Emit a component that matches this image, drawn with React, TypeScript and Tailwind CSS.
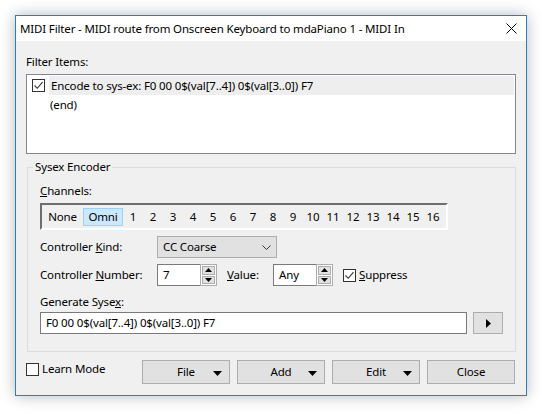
import React from 'react';

const font = "font-['Segoe_UI','Noto_Sans',sans-serif]";

function CheckBox({ checked }: { checked: boolean }) {
  return (
    <span className="w-[13px] h-[13px] border border-[#333333] bg-white flex items-center justify-center shrink-0">
      {checked && (
        <svg width="11" height="11" viewBox="0 0 11 11">
          <path d="M1.5 5.5 L4.3 8.3 L9.5 2.2" fill="none" stroke="#333333" strokeWidth="1.1" />
        </svg>
      )}
    </span>
  );
}

function Spin({ value, width }: { value: string; width: string }) {
  return (
    <div className={`flex h-[22px] ${width}`}>
      <div className="flex-1 bg-white border border-[#7a7a7a] border-r-0 pl-[5px] flex items-center">{value}</div>
      <div className="w-[17px] flex flex-col border border-[#adadad] bg-white p-px gap-px">
        <div className="flex-1 bg-[#e1e1e1] border border-[#adadad] flex items-center justify-center">
          <svg width="7" height="4" viewBox="0 0 7 4"><path d="M0 4 L3.5 0 L7 4 Z" fill="#000" /></svg>
        </div>
        <div className="flex-1 bg-[#e1e1e1] border border-[#adadad] flex items-center justify-center">
          <svg width="7" height="4" viewBox="0 0 7 4"><path d="M0 0 L7 0 L3.5 4 Z" fill="#000" /></svg>
        </div>
      </div>
    </div>
  );
}

function Button({ label, menu }: { label: string; menu?: boolean }) {
  return (
    <button className="relative w-[88px] h-[24px] bg-[#e1e1e1] border border-[#adadad] flex items-center justify-center">
      <span>{label}</span>
      {menu && (
        <svg className="absolute right-[7px] top-[10px]" width="9" height="5" viewBox="0 0 9 5">
          <path d="M0 0 L9 0 L4.5 5 Z" fill="#000" />
        </svg>
      )}
    </button>
  );
}

export default function App() {
  const channels = Array.from({ length: 16 }, (_, i) => String(i + 1));

  return (
    <div className={`w-[542px] h-[414px] bg-white pt-[15px] pl-[15px] text-[11.5px] leading-[16px] tracking-[-0.15px] text-black ${font}`}>
      <div className="w-[512px] h-[381px] border border-[#1883d7] bg-[#f0f0f0] flex flex-col shadow-[0_0_14px_rgba(0,0,0,0.28)]">
        {/* Title bar */}
        <div className="h-[25px] bg-white flex items-center pl-[4px] pr-[9px] shrink-0">
          <span className="flex-1">MIDI Filter - MIDI route from Onscreen Keyboard to mdaPiano 1 - MIDI In</span>
          <svg width="11" height="11" viewBox="0 0 11 11">
            <path d="M0.5 0.5 L10.5 10.5 M10.5 0.5 L0.5 10.5" stroke="#000" strokeWidth="1" />
          </svg>
        </div>

        {/* Body */}
        <div className="flex-1 flex flex-col px-[10px] pt-[13px]">
          <div>Filter Items:</div>
          <div className="mt-[4px] h-[80px] bg-white border border-[#828790] pt-[1px] pr-[1px]">
            <div className="flex items-center h-[19px]">
              <span className="w-[5px]" />
              <CheckBox checked />
              <span className="ml-[4px] flex-1 h-full bg-[#eeeeee] flex items-center pl-[2px]">
                Encode to sys-ex: F0 00 0$(val[7..4]) 0$(val[3..0]) F7
              </span>
            </div>
            <div className="h-[19px] flex items-center pl-[23px]">(end)</div>
          </div>

          {/* Sysex Encoder group */}
          <fieldset className="mt-[5px] ml-px mr-px border border-[#dcdcdc] px-[12px] pb-[17px]">
            <legend className="ml-[-7px] px-[2px]">Sysex Encoder</legend>
            <div className="mt-[8px]"><u>C</u>hannels:</div>
            <div className="mt-[4px] w-[408px] h-[27px] border-2 border-t-[#6e6e6e] border-l-[#6e6e6e] border-b-white border-r-white flex items-center">
              <span className="w-[41px] text-center">None</span>
              <span className="w-[40px] h-[18px] bg-[#cce8ff] border border-[#99d1ff] flex items-center justify-center">Omni</span>
              {channels.map((c) => (
                <span key={c} className="w-[20px] text-center">{c}</span>
              ))}
            </div>

            <div className="mt-[6px] flex items-center">
              <span className="w-[117px]">Controller <u>K</u>ind:</span>
              <div className="w-[120px] h-[22px] bg-[#e1e1e1] border border-[#adadad] flex items-center pl-[5px] pr-[5px]">
                <span className="flex-1">CC Coarse</span>
                <svg width="9" height="5" viewBox="0 0 9 5">
                  <path d="M0.5 0.5 L4.5 4.5 L8.5 0.5" fill="none" stroke="#333" strokeWidth="1" />
                </svg>
              </div>
            </div>

            <div className="mt-[6px] flex items-center">
              <span className="w-[117px]">Controller <u>N</u>umber:</span>
              <Spin value="7" width="w-[60px]" />
              <span className="ml-[10px] w-[46px]"><u>V</u>alue:</span>
              <Spin value="Any" width="w-[60px]" />
              <span className="ml-[10px] flex items-center gap-[3px]">
                <CheckBox checked />
                <span><u>S</u>uppress</span>
              </span>
            </div>

            <div className="mt-[8px]">Generate Syse<u>x</u>:</div>
            <div className="mt-[2px] flex items-center">
              <div className="w-[427px] h-[22px] bg-white border border-[#7a7a7a] pl-[5px] flex items-center">
                F0 00 0$(val[7..4]) 0$(val[3..0]) F7
              </div>
              <button className="ml-[6px] w-[30px] h-[22px] bg-[#e1e1e1] border border-[#adadad] flex items-center justify-center">
                <svg width="5" height="9" viewBox="0 0 5 9"><path d="M0 0 L5 4.5 L0 9 Z" fill="#000" /></svg>
              </button>
            </div>
          </fieldset>

          {/* Bottom row */}
          <div className="mt-[8px] flex items-center">
            <span className="flex items-center gap-[3px] w-[116px] self-start mt-[1px]">
              <CheckBox checked={false} />
              <span>Learn Mode</span>
            </span>
            <div className="flex gap-[7px]">
              <Button label="File" menu />
              <Button label="Add" menu />
              <Button label="Edit" menu />
              <Button label="Close" />
            </div>
          </div>
        </div>
      </div>
    </div>
  );
}
